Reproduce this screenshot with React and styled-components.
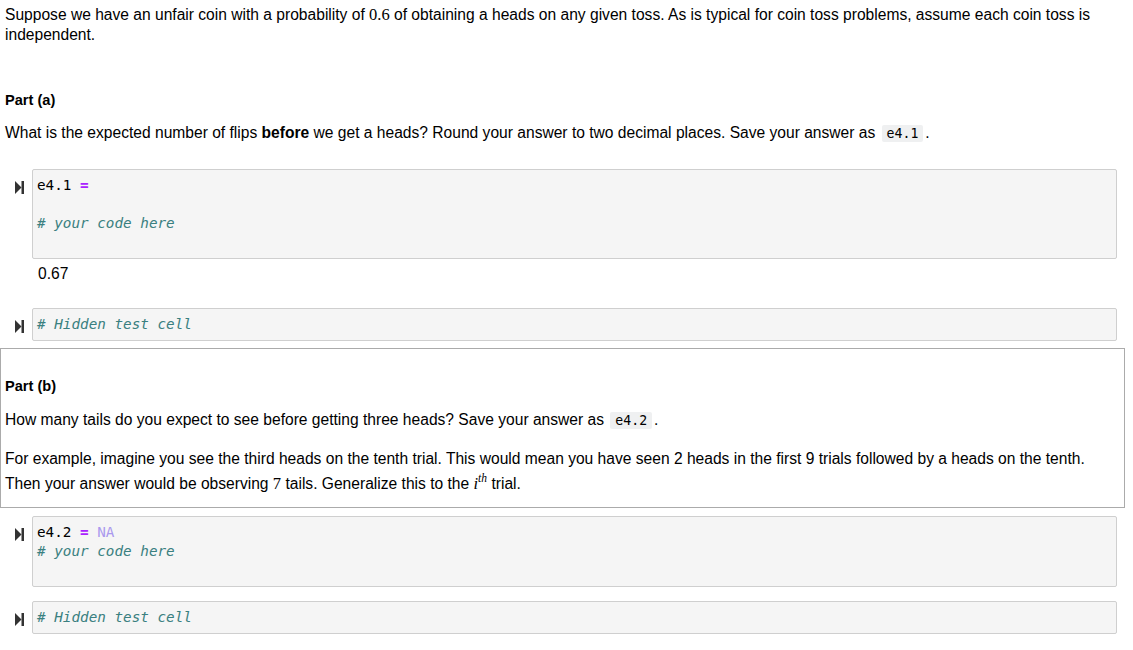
import React from 'react';
import styled, { createGlobalStyle } from 'styled-components';

const Global = createGlobalStyle`
  body {
    margin: 0;
    background: #fff;
    font-family: "Liberation Sans", Arial, sans-serif;
    font-size: 15.6px;
    line-height: 20px;
    color: #000;
  }
`

const Notebook = styled.div`
  padding: 5px 8px 16px 0;
`

const Markdown = styled.div`
  padding-left: 5px;
  padding-right: 5px;
  ${(props) => props.selected ? `
    border: 1px solid #ababab;
    padding-left: 4px;
    padding-top: 27px;
    padding-bottom: 13px;
    margin: 7px 0 8px 0;
  ` : ''}
`

const Para = styled.p`
  margin: ${(props) => props.gap || 0}px 0 0 0;
`

const Heading = styled.div`
  font-weight: bold;
  font-size: 14.6px;
  margin-top: ${(props) => props.gap || 0}px;
`

const Math = styled.span`
  font-family: "Liberation Serif", "Times New Roman", serif;
  font-size: 16.5px;
  line-height: 16px;
`

const Power = styled.span`
  display: inline-block;
  padding-top: 5px;
  font-family: "Liberation Serif", "Times New Roman", serif;
  font-style: italic;
  font-size: 16.5px;
  line-height: 20px;
  sup {
    font-size: 11.5px;
    line-height: 0;
    vertical-align: 7px;
  }
`

const InlineCode = styled.code`
  font-family: "DejaVu Sans Mono", "Liberation Mono", monospace;
  font-size: 13.2px;
  background: #eff0f1;
  padding: 1px 5px;
  border-radius: 2px;
  margin: 0 2px;
`

const CodeRow = styled.div`
  display: flex;
  align-items: flex-start;
  margin: ${(props) => props.gap || 0}px 8px 0 0;
`

const Prompt = styled.div`
  width: 32px;
  flex-shrink: 0;
  display: flex;
  justify-content: flex-end;
  padding-right: 8px;
  padding-top: 12px;
  box-sizing: border-box;
`

const InputBox = styled.div`
  flex: 1;
  background: #f5f5f5;
  border: 1px solid #cfcfcf;
  border-radius: 2px;
  padding: 6px 4px 6px 4px;
  font-family: "DejaVu Sans Mono", "Liberation Mono", monospace;
  font-size: 14.3px;
  line-height: 19px;
  min-height: ${(props) => props.lines * 19}px;
  white-space: pre;
`

const CodeLine = styled.div`
  height: 19px;
  color: #000;
`

const Op = styled.span`
  color: #aa22ff;
  font-weight: bold;
`

const Const = styled.span`
  color: #aa99ee;
`

const Comment = styled.span`
  color: #3a8080;
  font-style: italic;
`

const Output = styled.div`
  padding: 5px 0 0 38px;
  height: 44px;
`

const RunIcon = () => (
  <svg width="9" height="13" viewBox="0 0 9 13">
    <path d="M0 0 L6.5 6.5 L0 13 Z" fill="#333" />
    <rect x="6.5" y="0" width="2.5" height="13" fill="#333" />
  </svg>
)

const CodeCell = ({ gap, lines, children }) => (
  <CodeRow gap={gap}>
    <Prompt><RunIcon /></Prompt>
    <InputBox lines={lines}>{children}</InputBox>
  </CodeRow>
)

const App = () => {
  return (
    <Notebook>
      <Global />
      <Markdown>
        <Para>
          Suppose we have an unfair coin with a probability of <Math>0.6</Math> of obtaining a heads on any given toss. As is typical for coin toss problems, assume each coin toss is independent.
        </Para>
        <Heading gap={45}>Part (a)</Heading>
        <Para gap={13}>
          What is the expected number of flips <b>before</b> we get a heads? Round your answer to two decimal places. Save your answer as <InlineCode>e4.1</InlineCode>.
        </Para>
      </Markdown>

      <CodeCell gap={25} lines={4}>
        <CodeLine>e4.1 <Op>=</Op></CodeLine>
        <CodeLine />
        <CodeLine><Comment># your code here</Comment></CodeLine>
        <CodeLine />
      </CodeCell>
      <Output>0.67</Output>

      <CodeCell lines={1}>
        <CodeLine><Comment># Hidden test cell</Comment></CodeLine>
      </CodeCell>

      <Markdown selected>
        <Heading>Part (b)</Heading>
        <Para gap={14}>
          How many tails do you expect to see before getting three heads? Save your answer as <InlineCode>e4.2</InlineCode>.
        </Para>
        <Para gap={18}>
          For example, imagine you see the third heads on the tenth trial. This would mean you have seen 2 heads in the first 9 trials followed by a heads on the tenth. Then your answer would be observing <Math>7</Math> tails. Generalize this to the <Power>i<sup>th</sup></Power> trial.
        </Para>
      </Markdown>

      <CodeCell lines={3}>
        <CodeLine>e4.2 <Op>=</Op> <Const>NA</Const></CodeLine>
        <CodeLine><Comment># your code here</Comment></CodeLine>
        <CodeLine />
      </CodeCell>

      <CodeCell gap={14} lines={1}>
        <CodeLine><Comment># Hidden test cell</Comment></CodeLine>
      </CodeCell>
    </Notebook>
  );
}

export default App;
